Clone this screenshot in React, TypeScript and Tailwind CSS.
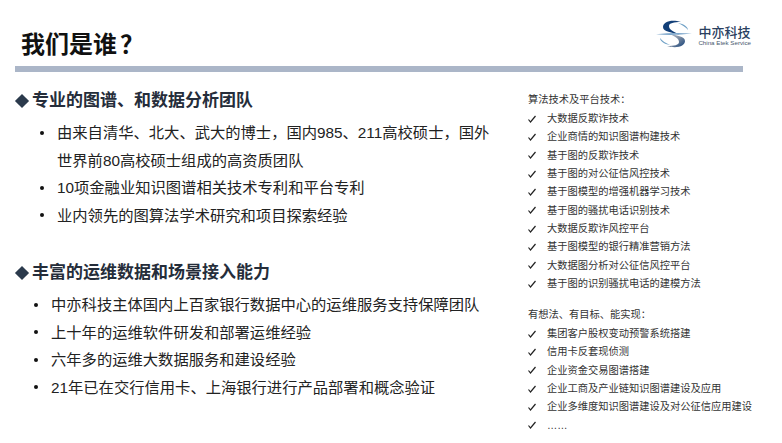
const sectionOne = [
  ["由来自清华、北大、武大的博士，国内985、211高校硕士，国外", "世界前80高校硕士组成的高资质团队"],
  ["10项金融业知识图谱相关技术专利和平台专利"],
  ["业内领先的图算法学术研究和项目探索经验"],
];

const sectionTwo = [
  ["中亦科技主体国内上百家银行数据中心的运维服务支持保障团队"],
  ["上十年的运维软件研发和部署运维经验"],
  ["六年多的运维大数据服务和建设经验"],
  ["21年已在交行信用卡、上海银行进行产品部署和概念验证"],
];

const techList = [
  "大数据反欺诈技术",
  "企业商情的知识图谱构建技术",
  "基于图的反欺诈技术",
  "基于图的对公征信风控技术",
  "基于图模型的增强机器学习技术",
  "基于图的骚扰电话识别技术",
  "大数据反欺诈风控平台",
  "基于图模型的银行精准营销方法",
  "大数据图分析对公征信风控平台",
  "基于图的识别骚扰电话的建模方法",
];

const goalList = [
  "集团客户股权变动预警系统搭建",
  "信用卡反套现侦测",
  "企业资金交易图谱搭建",
  "企业工商及产业链知识图谱建设及应用",
  "企业多维度知识图谱建设及对公征信应用建设",
  "……",
];

const Logo = () => (
  <div className="flex items-center gap-[6px]">
    <svg width="36" height="28" viewBox="0 0 36 28">
      <defs>
        <linearGradient id="swoosh" x1="0" y1="0" x2="1" y2="1">
          <stop offset="0" stopColor="#c2cad4" />
          <stop offset="0.5" stopColor="#7f8ea3" />
          <stop offset="1" stopColor="#123f78" />
        </linearGradient>
      </defs>
      <path d="M25 2C15-1 7 2 7 7c0 5 9 5 17 8-7-4-11-5-11-9 0-3 5-4 12-4z" fill="#123f78" />
      <path d="M11 26c10 3 18 0 18-5 0-5-9-5-17-8 7 4 11 5 11 9 0 3-5 4-12 4z" fill="url(#swoosh)" />
      <path d="M22 3c6 1 10 4 10 7-2-3-6-5-10-7z" fill="#6ea0c6" />
      <path d="M14 25c-6-1-10-4-10-7 2 3 6 5 10 7z" fill="#6ea0c6" />
      <path d="M0 14.300c12-1.500 24-1.800 36-.8-12 1.500-24 1.800-36 .8z" fill="#7fa8cc" />
    </svg>
    <div className="flex flex-col pt-[3px]">
      <span className="text-[13px] leading-[13px] font-medium text-[#2a4060]">中亦科技</span>
      <span className="text-[6.200px] leading-[7px] text-[#47586e] whitespace-nowrap">China Etek Service</span>
    </div>
  </div>
);

const Heading = ({ text }: { text: string }) => (
  <h2 className="flex items-center h-[24px] text-[17px] font-bold text-[#252d3a]">
    <span className="w-[13px] h-[13px] mr-[4px] flex items-center justify-center">
      <span className="block w-[10px] h-[10px] shrink-0 rotate-45 bg-[#2b3a4c]" />
    </span>
    {text}
  </h2>
);

const BulletList = ({ items, className }: { items: string[][]; className: string }) => (
  <ul className={className}>
    {items.map((lines) => (
      <li key={lines[0]} className="flex">
        <span className="w-[17px] h-[27.500px] flex items-center">
          <span className="block w-[4px] h-[4px] rounded-full bg-[#111]" />
        </span>
        <div className="text-[15.300px] leading-[27.500px] text-[#222] whitespace-nowrap">
          {lines.map((line) => (
            <div key={line}>{line}</div>
          ))}
        </div>
      </li>
    ))}
  </ul>
);

const CheckList = ({ title, items }: { title: string; items: string[] }) => (
  <div>
    <p className="text-[10.250px] leading-[18.500px] text-[#333]">{title}</p>
    <ul>
      {items.map((item) => (
        <li key={item} className="flex items-center h-[18.350px] text-[10.250px] text-[#333] whitespace-nowrap">
          <svg className="w-[19px] shrink-0" width="19" height="8" viewBox="0 0 19 8">
            <path d="M0.500 4.500L2.500 7L7.500 1" fill="none" stroke="#222" strokeWidth="1.200" />
          </svg>
          {item}
        </li>
      ))}
    </ul>
  </div>
);

export default function App() {
  return (
    <div
      lang="zh-CN"
      className="w-[782px] h-[443px] overflow-hidden bg-white font-['Liberation_Sans','Noto_Sans_CJK_SC',sans-serif]"
    >
      <header className="flex justify-between items-end h-[66px] pl-[21px] pr-[31px]">
        <h1 className="text-[24px] leading-[32px] mb-[5px] font-bold text-[#111]">
          我们是谁<span className="ml-[3px]">？</span>
        </h1>
        <div className="mb-[18px]">
          <Logo />
        </div>
      </header>
      <div className="ml-[15px] w-[728px] h-[6px] bg-[#abb6c8]" />
      <main className="flex pl-[15px] pt-[17px]">
        <section className="w-[513px] shrink-0">
          <Heading text="专业的图谱、和数据分析团队" />
          <div className="mt-[6px]">
            <BulletList items={sectionOne} className="pl-[25px]" />
          </div>
          <div className="mt-[32px]">
            <Heading text="丰富的运维数据和场景接入能力" />
          </div>
          <div className="mt-[6px]">
            <BulletList items={sectionTwo} className="pl-[19px]" />
          </div>
        </section>
        <aside className="flex flex-col gap-[13px] mt-[2px]">
          <CheckList title="算法技术及平台技术：" items={techList} />
          <CheckList title="有想法、有目标、能实现：" items={goalList} />
        </aside>
      </main>
    </div>
  );
}
